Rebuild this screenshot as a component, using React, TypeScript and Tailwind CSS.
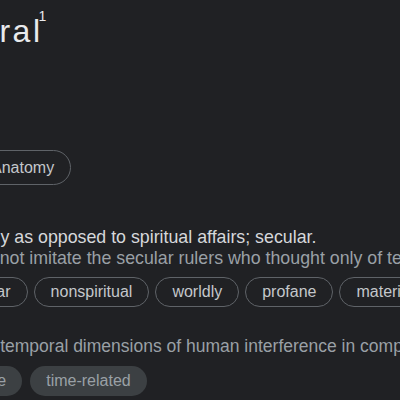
import type { ReactNode } from "react";

function OutlineChip({ children, tall }: { children: ReactNode; tall?: boolean }) {
  return (
    <span
      className={`flex items-center shrink-0 rounded-full border border-[#5f6368] px-4 text-[16px] leading-[20px] text-[#c4c7cb] ${
        tall ? "h-[35px]" : "h-[30px]"
      }`}
    >
      {children}
    </span>
  );
}

function FilledChip({ children }: { children: ReactNode }) {
  return (
    <span className="flex h-[30px] items-center shrink-0 rounded-full bg-[#3c4043] px-4 text-[16px] leading-[20px] text-[#9aa0a6]">
      {children}
    </span>
  );
}

export default function App() {
  return (
    <div className="w-[400px] h-[400px] overflow-hidden bg-[#202124] font-['Liberation_Sans',Arial,sans-serif] whitespace-nowrap">
      {/* headword */}
      <div className="flex items-start pt-[8px] -ml-[102px] text-[#e8eaed]">
        <span className="mt-[3px] text-[32px] leading-[40px] tracking-[2.5px]">temporal</span>
        <span className="mt-[1px] -ml-[4px] text-[14px] leading-[14px]">1</span>
      </div>

      {/* label */}
      <div className="flex mt-[99px] -ml-[26px]">
        <OutlineChip tall>Anatomy</OutlineChip>
      </div>

      {/* sense 1 */}
      <div className="mt-[42px] text-[17.8px] leading-[21px]">
        <p className="-ml-[46px] text-[#d6d8db]">
          worldly as opposed to spiritual affairs; secular.
        </p>
        <p className="-ml-[29px] text-[#9aa0a6]">
          did not imitate the secular rulers who thought only of temporal power
        </p>
      </div>
      <div className="flex gap-[6px] mt-[8px] -ml-[58px]">
        <OutlineChip>secular</OutlineChip>
        <OutlineChip>nonspiritual</OutlineChip>
        <OutlineChip>worldly</OutlineChip>
        <OutlineChip>profane</OutlineChip>
        <OutlineChip>material</OutlineChip>
      </div>

      {/* sense 2 */}
      <p className="mt-[29px] -ml-[29px] text-[17.5px] leading-[21px] text-[#9aa0a6]">
        the temporal dimensions of human interference in complex ecosystems
      </p>
      <div className="flex gap-[8px] mt-[9px] -ml-[72px]">
        <FilledChip>timewise</FilledChip>
        <FilledChip>time-related</FilledChip>
      </div>
    </div>
  );
}
